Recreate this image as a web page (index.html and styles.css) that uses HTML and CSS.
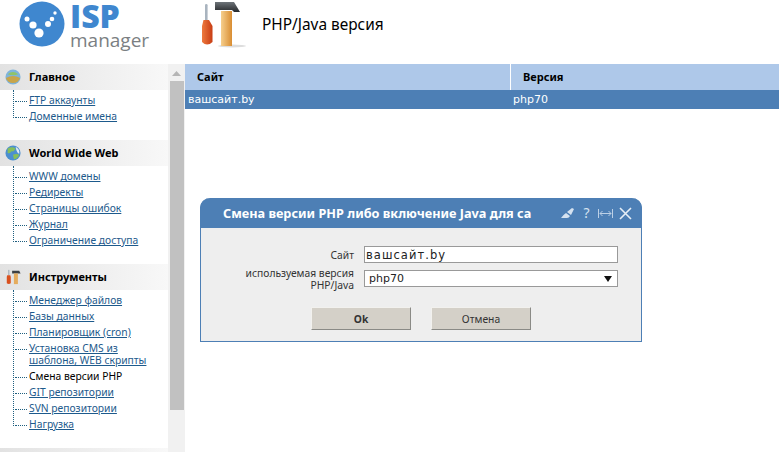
FILE: index.html
```html
<!DOCTYPE html>
<html lang="ru">
<head>
<meta charset="utf-8">
<title>ISPmanager</title>
<link rel="stylesheet" href="styles.css">
</head>
<body>
<header class="top">
  <div class="logo">
    <svg class="logo-mark" width="46" height="46" viewBox="0 0 46 46">
      <circle cx="23" cy="23" r="22.5" fill="#3f87cf"/>
      <circle cx="8" cy="18" r="2.500" fill="#fff"/>
      <circle cx="14" cy="24" r="3.600" fill="#fff"/>
      <circle cx="20" cy="32" r="4.600" fill="#fff"/>
      <circle cx="29" cy="23" r="3" fill="#fff"/>
      <circle cx="33" cy="18" r="2.300" fill="#fff"/>
      <circle cx="36" cy="12" r="1.700" fill="#fff"/>
    </svg>
    <div class="logo-text">
      <span class="logo-isp">ISP</span>
      <span class="logo-manager">manager</span>
    </div>
  </div>
  <svg class="tools" width="48" height="48" viewBox="0 0 48 48">
    <defs>
      <linearGradient id="wood" x1="0" x2="1" y1="0" y2="0"><stop offset="0" stop-color="#f6cf8d"/><stop offset="1" stop-color="#d98d32"/></linearGradient>
      <linearGradient id="red" x1="0" x2="1" y1="0" y2="0"><stop offset="0" stop-color="#ee7a3e"/><stop offset="1" stop-color="#c83d14"/></linearGradient>
      <linearGradient id="head" x1="0" x2="0" y1="0" y2="1"><stop offset="0" stop-color="#6d7378"/><stop offset="1" stop-color="#26292c"/></linearGradient>
    </defs>
    <ellipse cx="32" cy="46" rx="14" ry="1.500" fill="#ddd"/>
    <rect x="5" y="4" width="2.600" height="17" rx="1.300" fill="#a9b4bf"/>
    <path d="M3.500 20 h5.500 l3.500 6 v16 q-5.500 5 -10.500 0 v-16 z" fill="url(#red)"/>
    <path d="M15 2 h19 l6 10 h-6 l-2 -2 h-17 z" fill="url(#head)"/>
    <rect x="21" y="11" width="11" height="35" fill="url(#wood)"/>
  </svg>
  <h1 class="page-title">PHP/Java версия</h1>
</header>

<div class="layout">
  <nav class="sidebar">
    <section class="group">
      <h2 class="group-title">
        <svg class="group-icon" width="18" height="18" viewBox="0 0 18 18">
          <circle cx="9" cy="9" r="8.500" fill="#7fb4dc"/>
          <path d="M1 10 q8 -4 16 0 a8.500 8.500 0 0 1 -16 0z" fill="#c8a54a"/>
          <path d="M3 6 q6 -5 12 0 q-6 2 -12 0z" fill="#8fc46a"/>
        </svg>Главное
      </h2>
      <ul class="links">
        <li><a href="#">FTP аккаунты</a></li>
        <li><a href="#">Доменные имена</a></li>
      </ul>
    </section>
    <section class="group">
      <h2 class="group-title">
        <svg class="group-icon" width="18" height="18" viewBox="0 0 18 18">
          <circle cx="9" cy="9" r="8.500" fill="#4b8fd0"/>
          <path d="M3 4 q5 -3 9 0 q-2 4 -5 3 q-1 3 -4 2z M9 11 q4 -2 7 0 q-2 5 -6 5z" fill="#86bf5a"/>
          <path d="M12 2 q5 3 4 8 q-3 -1 -4 -8z" fill="#dfeaf3"/>
        </svg>World Wide Web
      </h2>
      <ul class="links">
        <li><a href="#">WWW домены</a></li>
        <li><a href="#">Редиректы</a></li>
        <li><a href="#">Страницы ошибок</a></li>
        <li><a href="#">Журнал</a></li>
        <li><a href="#">Ограничение доступа</a></li>
      </ul>
    </section>
    <section class="group">
      <h2 class="group-title">
        <svg class="group-icon" width="18" height="18" viewBox="0 0 18 18">
          <rect x="3.500" y="1" width="1.500" height="6" fill="#a9b4bf"/>
          <path d="M2.500 7 h3.500 l.5 2 v7 q-2.200 1.500 -4.500 0 v-7z" fill="#d9501e"/>
          <path d="M8 2 h8 l1.500 3 h-9.500z" fill="#3c4044"/>
          <rect x="10" y="5" width="4.500" height="12" fill="#e5ac5d"/>
        </svg>Инструменты
      </h2>
      <ul class="links">
        <li><a href="#">Менеджер файлов</a></li>
        <li><a href="#">Базы данных</a></li>
        <li><a href="#">Планировщик (cron)</a></li>
        <li><a href="#">Установка CMS из шаблона, WEB скрипты</a></li>
        <li class="current">Смена версии PHP</li>
        <li><a href="#">GIT репозитории</a></li>
        <li><a href="#">SVN репозитории</a></li>
        <li><a href="#">Нагрузка</a></li>
      </ul>
    </section>
    <div class="group-title"></div>
  </nav>

  <div class="scrollbar">
    <svg class="scroll-arrow" width="9" height="5" viewBox="0 0 9 5"><path d="M4.500 0 L9 5 H0z" fill="#b5b5b5"/></svg>
    <div class="scroll-thumb"></div>
  </div>

  <main class="content">
    <div class="table-row table-head">
      <div class="cell cell-site">Сайт</div>
      <div class="cell cell-version">Версия</div>
    </div>
    <div class="table-row table-selected">
      <div class="cell cell-site">вашсайт.by</div>
      <div class="cell cell-version">php70</div>
    </div>
  </main>
</div>

<div class="dialog">
  <div class="dialog-head">
    <span class="dialog-title">Смена версии PHP либо включение Java для са</span>
    <div class="dialog-icons">
      <svg width="14" height="12" viewBox="0 0 14 12"><path d="M0 11 Q2 8 5 6 L9 9 Q8 11 6 11z M6 5 L11 1 L13 2 L10 8z" fill="#d5e2f0"/></svg>
      <span class="help">?</span>
      <svg width="15" height="11" viewBox="0 0 15 11" fill="none" stroke="#bcd0e6"><path d="M.5 1v9M14.500 1v9M2 5.500h11M4.500 3L2 5.500 4.500 8M10.500 3L13 5.500 10.500 8"/></svg>
      <svg width="13" height="13" viewBox="0 0 13 13" fill="none" stroke="#e6eef6" stroke-width="1.600"><path d="M1 1l11 11M12 1L1 12"/></svg>
    </div>
  </div>
  <form class="dialog-body">
    <div class="field">
      <label class="field-label">Сайт</label>
      <div class="control control-text">вашсайт.by</div>
    </div>
    <div class="field">
      <label class="field-label">используемая версия PHP/Java</label>
      <div class="control control-select">php70<span class="caret"></span></div>
    </div>
    <div class="buttons">
      <button type="button" class="btn btn-ok">Ok</button>
      <button type="button" class="btn">Отмена</button>
    </div>
  </form>
</div>
</body>
</html>
```

FILE: styles.css
```css
* { box-sizing: border-box; }
html, body { margin: 0; height: 452px; overflow: hidden; }
body {
  background: #fff;
  color: #000;
  font-family: "Noto Sans", sans-serif;
  font-size: 10.300px;
  position: relative;
}

.top { height: 64px; display: flex; align-items: flex-start; }
.logo { width: 200px; display: flex; padding: 1px 0 0 19px; }
.logo-text { margin-left: 5px; display: flex; flex-direction: column; }
.logo-isp {
  font-family: "Open Sans", sans-serif;
  font-weight: 800;
  font-size: 32px;
  line-height: 30px;
  height: 30px;
  color: #3f87cf;
}
.logo-manager {
  font-family: "Open Sans", sans-serif;
  font-size: 19px;
  line-height: 18px;
  color: #7b7f83;
}
.tools { margin-top: 0; }
.page-title {
  margin: 16px 0 0 14px;
  font-family: "Noto Sans", sans-serif;
  font-weight: 400;
  font-size: 15.400px;
  line-height: 18px;
}

.layout { display: flex; height: 388px; }
.sidebar { width: 168px; overflow: hidden; flex: none; }
.group { margin-bottom: 16px; }
.group-title {
  height: 26px;
  margin: 0;
  display: flex;
  align-items: center;
  padding: 0 0 2px 5px;
  font-size: 11px;
  font-weight: 700;
  background: linear-gradient(to right, #e2e2e2, #f8f8f8);
}
.group-icon { width: 16px; height: 16px; margin: 2px 8px 0 0; flex: none; }

.links {
  list-style: none;
  margin: 0 0 0 13px;
  padding: 2px 0 0 15px;
  border-left: 1px dotted #1f5f7f;
  line-height: 12px;
  position: relative;
}
.links li {
  position: relative;
  padding: 2px 0;
  width: 124px;
}
.links li::before {
  content: "";
  position: absolute;
  left: -14px;
  top: 9px;
  width: 12px;
  border-top: 1px dotted #1f5f7f;
}
.links li:last-child::after {
  content: "";
  position: absolute;
  left: -16px;
  top: 10px;
  bottom: 0;
  width: 2px;
  background: #fff;
}
.links a { color: #1d5a8c; text-decoration: underline; }
.current { color: #000; }

.scrollbar {
  width: 17px;
  flex: none;
  background: #f1f1f1;
  position: relative;
  display: flex;
  flex-direction: column;
  align-items: center;
  padding-top: 7px;
}
.scroll-arrow { flex: none; }
.scroll-thumb { width: 14px; height: 329px; margin-top: 5px; background: #c1c1c1; }

.content { flex: 1; }
.table-row { display: flex; }
.table-head { height: 26px; background: #aec8e9; font-weight: 700; font-size: 11px; align-items: center; }
.table-head .cell-site { padding: 0 0 2px 12px; }
.table-head .cell-version { padding: 0 0 2px 12px; align-self: stretch; display: flex; align-items: center; border-left: 1px solid #fff; }
.table-selected {
  height: 19px;
  background: #4d7fb5;
  color: #fff;
  align-items: center;
  font-family: "DejaVu Sans", sans-serif;
  font-size: 11px;
}
.table-selected .cell-site { padding-left: 3px; }
.table-selected .cell-version { padding-left: 3px; }
.cell-site { width: 325px; }
.cell-version { flex: 1; }

.dialog {
  position: absolute;
  left: 200px;
  top: 198px;
  width: 442px;
  height: 144px;
  background: #eeeeee;
  border: 1px solid #4d7fb5;
  border-top: 0;
  border-radius: 10px 10px 0 0;
}
.dialog-head {
  height: 30px;
  margin: 0 -1px;
  background: #4d7fb5;
  border-radius: 10px 10px 0 0;
  display: flex;
  align-items: center;
  color: #fff;
  padding: 0 10px 0 23px;
}
.dialog-title { font-weight: 700; font-size: 12.700px; white-space: nowrap; flex: 1; }
.dialog-icons { display: flex; align-items: center; gap: 6px; }
.help { color: #d5e2f0; font-size: 14px; line-height: 14px; width: 11px; text-align: center; }

.dialog-body { padding: 18px 23px 0 0; }
.field { display: flex; align-items: center; gap: 10px; margin-bottom: 8px; height: 16px; }
.field-label {
  width: 153px;
  flex: none;
  text-align: right;
  color: #333;
  line-height: 12px;
  padding-top: 2px;
}
.control {
  width: 254px;
  height: 17px;
  background: #fff;
  border: 1px solid #999;
  line-height: 15px;
  font-family: "DejaVu Sans", sans-serif;
  font-size: 11px;
  color: #222;
  position: relative;
}
.control-text { padding-left: 1px; font-size: 11.500px; line-height: 17px; letter-spacing: 1.050px; }
.control-select { padding-left: 4px; }
.caret {
  position: absolute;
  right: 5px;
  top: 5px;
  border: 4px solid transparent;
  border-top: 6px solid #111;
  border-bottom: 0;
}
.buttons { display: flex; gap: 20px; margin: 21px 0 0 110px; }
.btn {
  width: 100px;
  height: 23px;
  padding: 0;
  background: #d4d0c8;
  border: 1px solid;
  border-color: #f2f1ee #8a8a86 #8a8a86 #f2f1ee;
  font-family: inherit;
  font-size: 10.300px;
  color: #333;
}
.btn-ok { font-weight: 700; }
```
